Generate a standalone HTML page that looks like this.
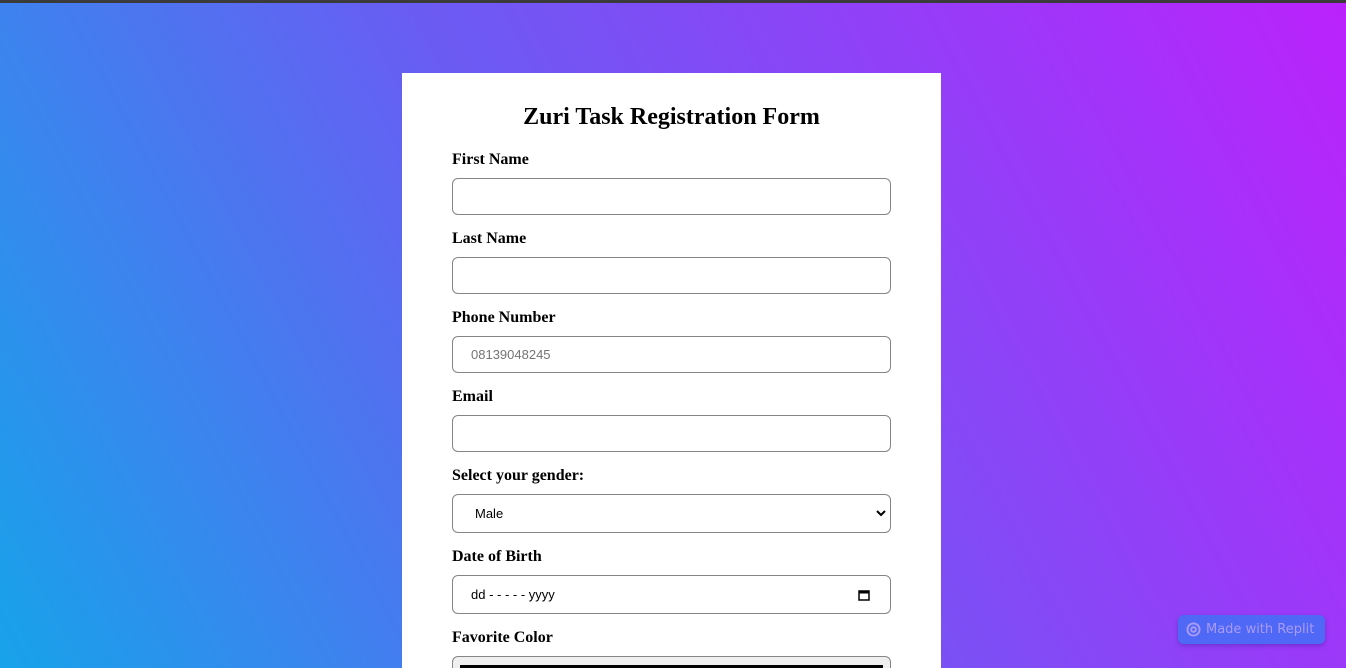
<!DOCTYPE html>
<html style="width:1346px;height:668px;overflow:hidden"><head><style>
*{box-sizing:border-box;margin:0;padding:0}
body{width:1346px;height:668px;overflow:hidden;position:relative;font-family:"Liberation Serif",serif;background:linear-gradient(62deg,#17a3ea 0%,#6a5cf3 45%,#bb22fc 100%)}
.top{position:absolute;left:0;top:0;width:1346px;height:3px;background:#3b3b3b}
.card{position:absolute;left:402px;top:73px;width:539px;height:595px;background:#fff;overflow:hidden}
h1{position:absolute;left:0;width:539px;top:31px;text-align:center;font-size:24px;font-weight:bold}
.l{position:absolute;left:50px;font-size:16px;font-weight:bold}
.i{position:absolute;left:50px;width:439px;height:37px;border:1px solid #858585;border-radius:6px;font-family:"Liberation Sans",sans-serif;font-size:13px;padding-left:18px;line-height:35px;color:#000}
.badge{position:absolute;left:1178px;top:615px;width:147px;height:29px;background:#4f68f5;border-radius:6px;color:#a99af5;font-family:"DejaVu Sans",sans-serif;font-size:13px;line-height:29px;padding-left:28px;box-shadow:0 2px 4px rgba(60,30,150,.4)}
</style></head><body>
<div class="top"></div>
<div class="card">
<h1>Zuri Task Registration Form</h1>
<div class="l" style="top:78px">First Name</div>
<div class="i" style="top:105px"></div>
<div class="l" style="top:157px">Last Name</div>
<div class="i" style="top:184px"></div>
<div class="l" style="top:236px">Phone Number</div>
<div class="i" style="top:263px;color:#757575">08139048245</div>
<div class="l" style="top:315px">Email</div>
<div class="i" style="top:342px"></div>
<div class="l" style="top:394px">Select your gender:</div>
<div class="i" style="top:421px;height:39px;line-height:37px;padding-left:22px">Male<svg style="position:absolute;right:4px;top:14px" width="10" height="8" viewBox="0 0 10 8"><path d="M1 2l4 4 4-4" stroke="#000" stroke-width="2" fill="none"/></svg></div>
<div class="l" style="top:475px">Date of Birth</div>
<div class="i" style="top:502px;height:39px;line-height:37px">dd - - - - - yyyy<svg style="position:absolute;right:20px;top:13px" width="12" height="12" viewBox="0 0 12 12"><rect x="1" y="2" width="10" height="9" stroke="#000" stroke-width="1.5" fill="none"/><rect x="1" y="2" width="10" height="2.5" fill="#000"/></svg></div>
<div class="l" style="top:556px">Favorite Color</div>
<div class="i" style="top:583px;background:#efefef;padding:0"><div style="position:absolute;left:7px;right:7px;top:8px;height:3px;background:#000"></div></div>
</div>
<div class="badge"><svg style="position:absolute;left:8px;top:7px" width="15" height="15" viewBox="0 0 16 16"><circle cx="8" cy="8" r="6.5" stroke="#a99af5" stroke-width="2" fill="none"/><circle cx="8" cy="8" r="2.5" stroke="#a99af5" stroke-width="2" fill="none"/></svg>Made with Replit</div>
</body></html>
